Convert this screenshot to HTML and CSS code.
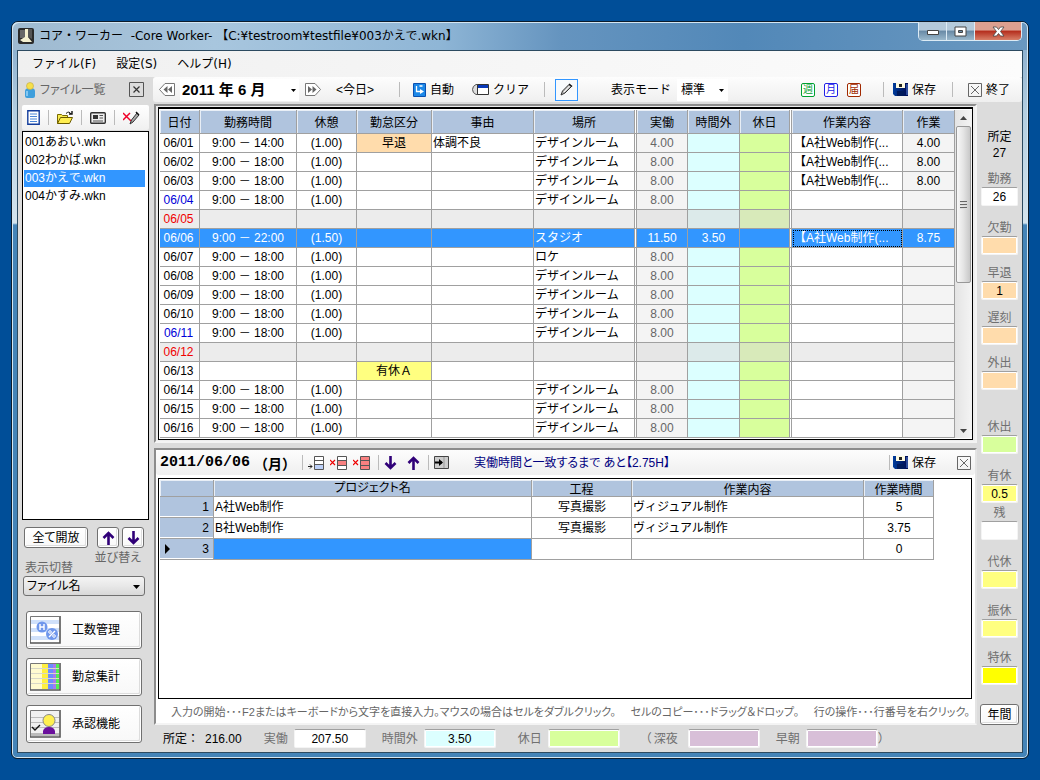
FILE: index.html
```html
<!DOCTYPE html>
<html lang="ja">
<head>
<meta charset="utf-8">
<title>コア・ワーカー</title>
<link rel="stylesheet" href="styles.css">
</head>
<body>
<svg class="defs" aria-hidden="true">
  <defs>
    <linearGradient id="navy" x1="0" x2="1"><stop offset="0" stop-color="#003c9c"/><stop offset="1" stop-color="#000a50"/></linearGradient>
    <symbol id="floppy" viewBox="0 0 15 13"><path d="M0 0h15v13H2l-2-2z" fill="url(#navy)"/><path d="M3 0h9v5H3z" fill="#fffbe0"/><path d="M6 1h3v3H6z" fill="#222"/><path d="M4 8h7v5H4z" fill="#001a5c"/><path d="M14 1v11" stroke="#5a8ae0"/></symbol>
    <symbol id="xbox" viewBox="0 0 14 14"><path d="M.5.5h13v13H.5zM3 3l8 8M11 3l-8 8" fill="none" stroke="#666"/></symbol>
    <symbol id="down" viewBox="0 0 13 14"><path d="M6.500 0v12M1.500 7l5 5 5-5" fill="none" stroke="#300078" stroke-width="2.600"/></symbol>
    <symbol id="up" viewBox="0 0 13 14"><path d="M6.500 14V2M1.500 7l5-5 5 5" fill="none" stroke="#300078" stroke-width="2.600"/></symbol>
  </defs>
</svg>
<div class="window">
  <header class="titlebar">
    <svg class="app-icon" width="16" height="16" viewBox="0 0 16 16"><rect width="16" height="16" rx="2" fill="#2b2b2b"/><path d="M2 2h6v8H2z" fill="#666"/><path d="M7 1h3v8l4 5H5l-3-2 5-3z" fill="#f4f0d0"/><path d="M10 1h4v10l-4-2z" fill="#555"/></svg>
    <h1 class="title">コア・ワーカー&nbsp; -Core Worker- 【C:¥testroom¥testfile¥003かえで.wkn】</h1>
    <div class="caption-buttons">
      <button class="cap" aria-label="最小化"><svg width="14" height="10" viewBox="0 0 14 10"><path d="M1.500 4.500h11v4h-11z" fill="#fff" stroke="#444"/></svg></button>
      <button class="cap" aria-label="最大化"><svg width="13" height="11" viewBox="0 0 13 11"><path d="M1 1h11v9H1zM4.500 4.500h4v2h-4z" fill="#fff" fill-rule="evenodd" stroke="#444"/></svg></button>
      <button class="cap cap-close" aria-label="閉じる"><svg width="13" height="11" viewBox="0 0 13 11"><path d="M1 1h3.500l2 2.500L8.500 1H12L8.500 5.500 12 10H8.500l-2-2.500-2 2.500H1l3.500-4.500z" fill="#fff" stroke="#444" stroke-width=".8"/></svg></button>
    </div>
  </header>
  <div class="client">
    <nav class="menu">
      <button>ファイル(F)</button><button>設定(S)</button><button>ヘルプ(H)</button>
    </nav>
    <div class="workspace">
      <aside class="side">
        <div class="side-head">
          <svg width="12" height="16" viewBox="0 0 12 16"><path d="M1 9q0-3 5-3t5 3v5q0 2-2 2H3q-2 0-2-2z" fill="#3f9fdc"/><path d="M3 9v5" stroke="#9bd4f8" stroke-width="1.500"/><circle cx="6" cy="4" r="3.500" fill="#f6e04a" stroke="#c0a848" stroke-width=".6"/></svg>
          <span class="pg">ファイル一覧</span>
          <button class="close-side" aria-label="一覧を閉じる"><svg width="15" height="15" viewBox="0 0 15 15"><path d="M.5.5h14v14H.5z" fill="none" stroke="#555"/><path d="M4.500 4.500l6 6M10.500 4.500l-6 6" stroke="#333" stroke-width="1.200"/></svg></button>
        </div>
        <div class="side-tools">
          <button aria-label="新規"><svg width="13" height="15" viewBox="0 0 13 15"><path d="M.8.8h11.400v13.400H.8z" fill="#fff" stroke="#123c9c" stroke-width="1.400"/><path d="M3 4h7M3 6.500h7M3 9h7M3 11.500h7" stroke="#4a86d8"/></svg></button>
          <i class="sep"></i>
          <button aria-label="開く"><svg width="17" height="14" viewBox="0 0 17 14"><path d="M.5 12.500v-9h4l1 1h5v3" fill="#f8ec50" stroke="#7a6a00"/><path d="M.5 12.500l3-6h12l-3 6z" fill="#ffee50" stroke="#6a5a00"/><path d="M9 2.500q3-3 5 .5" fill="none" stroke="#111"/><path d="M12 3h3V0" fill="none" stroke="#111" stroke-width="1.400"/></svg></button>
          <i class="sep"></i>
          <button aria-label="詳細"><svg width="16" height="12" viewBox="0 0 16 12"><rect x=".7" y=".7" width="14.600" height="10.600" rx="1" fill="#eee" stroke="#333" stroke-width="1.400"/><path d="M3 3h5v4H3z" fill="#333"/><path d="M9.500 3.500H13M9.500 6H13M3 9h10" stroke="#555"/></svg></button>
          <i class="sep"></i>
          <button aria-label="削除"><svg width="17" height="14" viewBox="0 0 17 14"><path d="M0 2l8 8M7 2L0 9" stroke="#f00028" stroke-width="1.500"/><path d="M7 13l1.500-4 5.500-7 2 2-6 7z" fill="#aaa" stroke="#333"/><path d="M13 1l3 3" stroke="#111" stroke-width="1.500"/></svg></button>
        </div>
        <ul class="files mono" role="listbox" aria-label="ファイル一覧">
          <li role="option">001あおい.wkn</li>
          <li role="option">002わかば.wkn</li>
          <li role="option" aria-selected="true" class="on">003かえで.wkn</li>
          <li role="option">004かすみ.wkn</li>
        </ul>
        <div class="side-row">
          <button class="btn btn-open pg">全て開放</button>
          <div class="sort-buttons">
            <button class="btn btn-sort" aria-label="上へ"><svg width="13" height="14"><use href="#up"/></svg></button>
            <button class="btn btn-sort" aria-label="下へ"><svg width="13" height="14"><use href="#down"/></svg></button>
          </div>
        </div>
        <div class="side-labels"><label class="pg" for="sortkey">表示切替</label><span class="pg sort-label">並び替え</span></div>
        <div class="combo side-combo"><select id="sortkey" class="pg"><option>ファイル名</option></select><svg class="combo-arrow" width="7" height="4" viewBox="0 0 7 4"><path d="M0 0h7L3.500 4z"/></svg></div>
        <div class="big-buttons">
          <button class="btn big"><svg width="31" height="28" viewBox="0 0 31 28"><path d="M1 1h28v25H1z" fill="#fff"/><path d="M1 4h28v4H1zM1 12h28v4H1zM1 20h28v4H1z" fill="#cfe0fa"/><circle cx="12" cy="11" r="5.500" fill="#6f97ec"/><circle cx="22" cy="18" r="6" fill="#6f97ec"/><path d="M10 8v6M14 8v6M10 11h4M25 15l-6 6" stroke="#fff" stroke-width="1.400"/><circle cx="20" cy="16" r="1.300" fill="none" stroke="#fff"/><circle cx="24" cy="20" r="1.300" fill="none" stroke="#fff"/><path d="M.5 27V.5H29" fill="none" stroke="#777"/><path d="M0 27h30V0" fill="none" stroke="#555" stroke-width="1.600"/></svg><span>工数管理</span></button>
          <button class="btn big"><svg width="31" height="28" viewBox="0 0 31 28"><path d="M1 1h28v25H1z" fill="#fffbd0"/><path d="M12 1h6v25h-6z" fill="#ffef40"/><path d="M18 1h5v25h-5z" fill="#6c8cff"/><path d="M23 1h3v25h-3z" fill="#a878f0"/><path d="M26 1h3v25h-3z" fill="#50f050"/><path d="M1 5.500h28M1 10.500h28M1 15.500h28M1 20.500h28" stroke="#d8d8c8"/><path d="M.5 27V.5H29" fill="none" stroke="#777"/><path d="M0 27h30V0" fill="none" stroke="#555" stroke-width="1.600"/></svg><span>勤怠集計</span></button>
          <button class="btn big"><svg width="31" height="28" viewBox="0 0 31 28"><path d="M1 1h28v25H1z" fill="#f0f0f0"/><path d="M1 7.500h28M1 12.500h28M1 17.500h28" stroke="#bbb"/><path d="M1 23h28v3H1z" fill="#bbb"/><path d="M13 24v-3q1-4 6-4t6 4v3z" fill="#6a109c"/><circle cx="19" cy="10.500" r="6" fill="#fff050" stroke="#888"/><path d="M2 17l3 3 5-5" fill="none" stroke="#111" stroke-width="1.400"/><path d="M.5 27V.5H29" fill="none" stroke="#777"/><path d="M0 27h30V0" fill="none" stroke="#555" stroke-width="1.600"/></svg><span>承認機能</span></button>
        </div>
      </aside>
      <main class="main">
        <div class="toolbar">
          <button aria-label="前月"><svg width="16" height="13" viewBox="0 0 16 13"><path d="M15.500.5H6L.5 6.500l5.500 6h9.500z" fill="#fff" stroke="#777"/><path d="M8.500 3v7L4.500 6.500zM13 3v7L9 6.500z" fill="#666"/></svg></button>
          <div class="combo month"><select aria-label="年月"><option>2011 年 6 月</option></select><svg class="combo-arrow" width="5" height="3" viewBox="0 0 5 3"><path d="M0 0h5L2.500 3z"/></svg></div>
          <button aria-label="翌月"><svg width="16" height="13" viewBox="0 0 16 13"><path d="M.5.5H10l5.500 6-5.500 6H.5z" fill="#fff" stroke="#777"/><path d="M3 3v7l4-3.500zM7.500 3v7l4-3.500z" fill="#666"/></svg></button>
          <button class="today">&lt;今日&gt;</button>
          <i class="sep"></i>
          <button class="ico-btn auto"><svg width="13" height="14" viewBox="0 0 13 14"><rect width="13" height="14" rx="1" fill="#0a50b0"/><path d="M1 1h11v12H1z" fill="#1c88e8"/><path d="M3.500 3v5.500H8M6.500 3h3" fill="none" stroke="#fff" stroke-width="1.300"/><path d="M7 6l4 2.500L7 11z" fill="#fff"/></svg>自動</button>
          <button class="ico-btn clear"><svg width="17" height="11" viewBox="0 0 17 11"><path d="M6 .5H4Q.5 2 .5 5.500T4 10.500h2z" fill="#ddd" stroke="#555"/><path d="M5.500.5h11v10h-11z" fill="#fff" stroke="#333"/><path d="M6 1h10v3H6z" fill="#0838b8"/></svg>クリア</button>
          <i class="sep"></i>
          <button class="pen" aria-label="編集" aria-pressed="true"><svg width="13" height="13" viewBox="0 0 13 13"><path d="M1 12l1.500-4L9 1.500l2.500 2L5 10z" fill="#bbb" stroke="#333"/><path d="M4 9l5.500-6" stroke="#fff"/><path d="M9 1l3 2.500" stroke="#111" stroke-width="1.500"/></svg></button>
          <label class="mode-label" for="mode">表示モード</label>
          <div class="combo mode"><select id="mode"><option>標準</option></select><svg class="combo-arrow" width="5" height="3" viewBox="0 0 5 3"><path d="M0 0h5L2.500 3z"/></svg></div>
          <span class="spring"></span>
          <div class="stamps"><button class="stamp week">週</button><button class="stamp mon">月</button><button class="stamp note">届</button></div>
          <i class="sep"></i>
          <button class="ico-btn"><svg width="15" height="13"><use href="#floppy"/></svg>保存</button>
          <i class="sep"></i>
          <button class="ico-btn quit"><svg width="14" height="14"><use href="#xbox"/></svg>終了</button>
        </div>
        <div class="body">
          <div class="center">
            <section class="panel upper">
              <div class="box sheet-box">
                <table class="sheet mono">
                  <colgroup><col class="c-date"><col class="c-time"><col class="c-rest"><col class="c-kind"><col class="c-why"><col class="c-place"><col class="c-work"><col class="c-over"><col class="c-over"><col><col class="c-job"></colgroup>
                  <thead><tr><th>日付</th><th>勤務時間</th><th>休憩</th><th>勤怠区分</th><th>事由</th><th class="dbl">場所</th><th>実働</th><th>時間外</th><th class="dbl">休日</th><th>作業内容</th><th>作業</th></tr></thead>
                  <tbody>
                    <tr><td>06/01</td><td>9:00 － 14:00</td><td>(1.00)</td><td class="orange">早退</td><td>体調不良</td><td>デザインルーム</td><td>4.00</td><td></td><td></td><td>【A社Web制作(...</td><td>4.00</td></tr>
                    <tr><td>06/02</td><td>9:00 － 18:00</td><td>(1.00)</td><td></td><td></td><td>デザインルーム</td><td>8.00</td><td></td><td></td><td>【A社Web制作(...</td><td>8.00</td></tr>
                    <tr><td>06/03</td><td>9:00 － 18:00</td><td>(1.00)</td><td></td><td></td><td>デザインルーム</td><td>8.00</td><td></td><td></td><td>【A社Web制作(...</td><td>8.00</td></tr>
                    <tr class="sat"><td>06/04</td><td>9:00 － 18:00</td><td>(1.00)</td><td></td><td></td><td>デザインルーム</td><td>8.00</td><td></td><td></td><td></td><td></td></tr>
                    <tr class="sun"><td>06/05</td><td></td><td></td><td></td><td></td><td></td><td></td><td></td><td></td><td></td><td></td></tr>
                    <tr class="sel"><td>06/06</td><td>9:00 － 22:00</td><td>(1.50)</td><td></td><td></td><td>スタジオ</td><td>11.50</td><td>3.50</td><td></td><td class="focus">【A社Web制作(...</td><td>8.75</td></tr>
                    <tr><td>06/07</td><td>9:00 － 18:00</td><td>(1.00)</td><td></td><td></td><td>ロケ</td><td>8.00</td><td></td><td></td><td></td><td></td></tr>
                    <tr><td>06/08</td><td>9:00 － 18:00</td><td>(1.00)</td><td></td><td></td><td>デザインルーム</td><td>8.00</td><td></td><td></td><td></td><td></td></tr>
                    <tr><td>06/09</td><td>9:00 － 18:00</td><td>(1.00)</td><td></td><td></td><td>デザインルーム</td><td>8.00</td><td></td><td></td><td></td><td></td></tr>
                    <tr><td>06/10</td><td>9:00 － 18:00</td><td>(1.00)</td><td></td><td></td><td>デザインルーム</td><td>8.00</td><td></td><td></td><td></td><td></td></tr>
                    <tr class="sat"><td>06/11</td><td>9:00 － 18:00</td><td>(1.00)</td><td></td><td></td><td>デザインルーム</td><td>8.00</td><td></td><td></td><td></td><td></td></tr>
                    <tr class="sun"><td>06/12</td><td></td><td></td><td></td><td></td><td></td><td></td><td></td><td></td><td></td><td></td></tr>
                    <tr><td>06/13</td><td></td><td></td><td class="yellow">有休Ａ</td><td></td><td></td><td></td><td></td><td></td><td></td><td></td></tr>
                    <tr><td>06/14</td><td>9:00 － 18:00</td><td>(1.00)</td><td></td><td></td><td>デザインルーム</td><td>8.00</td><td></td><td></td><td></td><td></td></tr>
                    <tr><td>06/15</td><td>9:00 － 18:00</td><td>(1.00)</td><td></td><td></td><td>デザインルーム</td><td>8.00</td><td></td><td></td><td></td><td></td></tr>
                    <tr><td>06/16</td><td>9:00 － 18:00</td><td>(1.00)</td><td></td><td></td><td>デザインルーム</td><td>8.00</td><td></td><td></td><td></td><td></td></tr>
                  </tbody>
                </table>
                <div class="scroll">
                  <svg width="7" height="4" viewBox="0 0 7 4"><path d="M0 4h7L3.500 0z" fill="#444"/></svg>
                  <div class="thumb"><i></i><i></i><i></i></div>
                  <svg class="scroll-down" width="7" height="4" viewBox="0 0 7 4"><path d="M0 0h7L3.500 4z" fill="#444"/></svg>
                </div>
              </div>
            </section>
            <section class="panel lower">
              <div class="toolbar detail-bar">
                <h2 class="day">2011/06/06 <span>（月）</span></h2>
                <i class="sep"></i>
                <button aria-label="行挿入"><svg width="16" height="14" viewBox="0 0 16 14"><path d="M6.500.5h9v13h-9z" fill="#fff" stroke="#555"/><path d="M7 9h8v4H7z" fill="#bcd0f8"/><path d="M6.500 4.500h9M6.500 8.500h9" stroke="#555"/><path d="M0 10.500h4M2 8.500l2 2-2 2" fill="none" stroke="#222"/></svg></button>
                <button aria-label="行クリア"><svg width="17" height="14" viewBox="0 0 17 14"><path d="M7.500.5h9v13h-9z" fill="#fff" stroke="#555"/><path d="M8 5h8v4H8z" fill="#f88080"/><path d="M7.500 4.500h9M7.500 9.500h9" stroke="#555"/><path d="M0 4l5 5M5 4L0 9" stroke="#e00" stroke-width="1.200"/></svg></button>
                <button aria-label="全クリア"><svg width="17" height="14" viewBox="0 0 17 14"><path d="M7.500.5h9v13h-9z" fill="#f88080" stroke="#555"/><path d="M7.500 4.500h9M7.500 9.500h9" stroke="#555"/><path d="M0 4l5 5M5 4L0 9" stroke="#e00" stroke-width="1.200"/></svg></button>
                <i class="sep"></i>
                <button aria-label="下へ移動"><svg width="13" height="14"><use href="#down"/></svg></button>
                <button class="move-up" aria-label="上へ移動"><svg width="13" height="14"><use href="#up"/></svg></button>
                <i class="sep"></i>
                <button aria-label="取り込み"><svg width="15" height="13" viewBox="0 0 15 13"><path d="M.5.5h14v12H.5z" fill="#ccc" stroke="#444"/><path d="M10 1v11" stroke="#999"/><path d="M1 6.500h7" stroke="#000" stroke-width="2"/><path d="M5 3l4 3.500L5 10z"/></svg></button>
                <p class="remain pg">実働時間と一致するまで あと【2.75H】</p>
                <span class="spring"></span>
                <i class="sep"></i>
                <button class="ico-btn"><svg width="15" height="13"><use href="#floppy"/></svg>保存</button>
                <button class="close-detail" aria-label="閉じる"><svg width="14" height="14"><use href="#xbox"/></svg></button>
              </div>
              <div class="box detail-box">
                <table class="detail mono">
                  <colgroup><col class="d-no"><col class="d-name"><col class="d-step"><col class="d-what"><col class="d-hour"></colgroup>
                  <thead><tr><th></th><th class="pg">プロジェクト名</th><th>工程</th><th>作業内容</th><th>作業時間</th></tr></thead>
                  <tbody>
                    <tr><th>1</th><td>A社Web制作</td><td>写真撮影</td><td>ヴィジュアル制作</td><td>5</td></tr>
                    <tr><th>2</th><td>B社Web制作</td><td>写真撮影</td><td>ヴィジュアル制作</td><td>3.75</td></tr>
                    <tr><th><div class="current">3</div></th><td class="active"></td><td></td><td></td><td>0</td></tr>
                  </tbody>
                </table>
              </div>
              <p class="hint pg"><span>入力の開始･･･F2またはキーボードから文字を直接入力。マウスの場合はセルをダブルクリック。</span><span>セルのコピー･･･ドラッグ＆ドロップ。</span><span>行の操作･･･行番号を右クリック。</span></p>
            </section>
          </div>
          <div class="stats">
            <div class="stat dark"><span>所定</span><output>27</output></div>
            <div class="stat g10"><label for="s1">勤務</label><input id="s1" value="26" readonly></div>
            <div class="stat g14"><label for="s2">欠勤</label><input id="s2" class="orange" readonly></div>
            <div class="stat g10"><label for="s3">早退</label><input id="s3" class="orange" value="1" readonly></div>
            <div class="stat g10"><label for="s4">遅刻</label><input id="s4" class="orange" readonly></div>
            <div class="stat g10"><label for="s5">外出</label><input id="s5" class="orange" readonly></div>
            <div class="stat g29"><label for="s6">休出</label><input id="s6" class="lime" readonly></div>
            <div class="stat g14"><label for="s7">有休</label><input id="s7" class="yellow" value="0.5" readonly></div>
            <div class="stat g2"><label for="s8">残</label><input id="s8" readonly></div>
            <div class="stat g14"><label for="s9">代休</label><input id="s9" class="yellow" readonly></div>
            <div class="stat g14"><label for="s10">振休</label><input id="s10" class="yellow" readonly></div>
            <div class="stat g12"><label for="s11">特休</label><input id="s11" class="vivid" readonly></div>
            <button class="btn year">年間</button>
          </div>
        </div>
        <footer class="totals">
          <span class="fixed">所定：</span><output class="fixed-value">216.00</output>
          <label for="t1">実働</label><input id="t1" value="207.50" readonly>
          <label for="t2">時間外</label><input id="t2" class="aqua" value="3.50" readonly>
          <label for="t3" class="wide">休日</label><input id="t3" class="lime" readonly>
          <span class="paren">（</span><label for="t4" class="tight">深夜</label><input id="t4" class="mauve" readonly>
          <label for="t5">早朝</label><input id="t5" class="mauve" readonly><span>）</span>
        </footer>
      </main>
    </div>
  </div>
</div>
</body>
</html>
```
FILE: styles.css
```css
* { box-sizing: border-box; }
body {
  margin: 0;
  min-height: 100vh;
  padding: 21px 11px;
  display: flex;
  background: #004e98;
  font: 12px/16px "Liberation Sans", "Noto Sans CJK JP", sans-serif;
  color: #000;
}
.defs { position: absolute; width: 0; height: 0; }
h1, h2, p, ul { margin: 0; padding: 0; font-weight: normal; }
button {
  font: inherit; color: inherit; background: none; border: 0; padding: 0; margin: 0;
  display: flex; align-items: center; justify-content: center; white-space: nowrap;
}
svg { display: block; flex: none; }
input, select { font: inherit; color: inherit; min-width: 0; }
.mono { font-family: "Liberation Sans", "Noto Sans CJK JP", sans-serif; }
.pg { font-family: "Liberation Sans", "Noto Sans CJK JP", sans-serif; font-feature-settings: "palt"; }

/* window frame */
.window {
  flex: 1; min-width: 0; display: flex; flex-direction: column;
  border: 1px solid #0c1c2c; border-radius: 7px 7px 6px 6px;
  box-shadow: inset 0 0 0 1px #d4e6f2;
  background: linear-gradient(180deg, #8fb2d0 0, #8fb2d0 28px, #b4cee0 90px, #d4e4ee 201px, #4484b8 203px, #4484b8 100%);
  padding: 0 5px 5px;
  overflow: hidden;
}
.titlebar {
  height: 28px; flex: none; display: flex; align-items: center; margin: 0 -5px; padding: 0 6px;
  background: linear-gradient(90deg, #9fbad0 0, #a8c6de 20%, #8fb6d6 42%, #6594bf 54%, #5288b8 72%, #6a98c0 100%);
  border-radius: 6px 6px 0 0; box-shadow: inset 1px 1px 0 #d4e6f2, inset -1px 0 0 #d4e6f2;
}
.title { flex: 1; padding-left: 5px; font: 12px/20px "DejaVu Sans", "Noto Sans CJK JP", sans-serif; white-space: nowrap; }
.caption-buttons { display: flex; align-self: flex-start; border: 1px solid #dcebf5; border-top: 0; border-radius: 0 0 5px 5px; overflow: hidden; }
.cap { width: 28px; height: 18px; background: linear-gradient(#b4cadb 0 45%, #688aa6 50%, #9ab8cc); border-right: 1px solid #dcebf5; }
.cap-close { width: 46px; border: 0; background: linear-gradient(#dca090 0 45%, #b42c1c 50%, #d88068); }

.client { flex: 1; display: flex; flex-direction: column; background: #dcdcdc; border: 1px solid #2c4a60; }
.menu {
  height: 26px; display: flex; align-items: center; gap: 20px; padding-left: 14px;
  background: linear-gradient(90deg, #f0f0f0, #fcfcfc); font: 12px/16px "DejaVu Sans", "Noto Sans CJK JP", sans-serif;
}
.workspace { flex: 1; display: flex; }

/* left side */
.side { width: 135px; flex: none; display: flex; flex-direction: column; padding: 0 4px 9px; color: #666; }
.side-head { height: 25px; display: flex; align-items: center; gap: 4px; padding: 0 5px 0 2px; }
.close-side { margin-left: auto; }
.side-tools { height: 25px; margin: 3px 0 1px; display: flex; align-items: center; justify-content: space-between; padding: 0 9px 0 5px; background: linear-gradient(#fff, #f0f0f0); border-radius: 2px; }
.sep { width: 1px; height: 15px; background: #bbb; flex: none; }
.files { flex: 1; border: 1px solid #000; background: #fff; color: #000; padding: 2px 3px 0 1px; list-style: none; }
.files li { height: 18px; line-height: 17px; padding-left: 1px; border-bottom: 1px solid #fff; }
.files .on { background: #3296ff; color: #fff; }
.btn { border: 1px solid #707070; border-radius: 3px; background: linear-gradient(#fff, #f8f8f8); box-shadow: inset 0 0 0 1px #fff, inset -1px -1px 0 1px #ddd; color: #000; }
.side-row { display: flex; justify-content: space-between; padding: 7px 5px 0 2px; }
.btn-open { width: 64px; height: 21px; }
.sort-buttons { display: flex; gap: 3px; }
.btn-sort { width: 22px; height: 21px; }
.side-labels { height: 28px; display: flex; justify-content: space-between; padding: 2px 8px 0 3px; }
.side-labels label { align-self: flex-end; }
.combo { position: relative; display: flex; }
.combo select { appearance: none; border: 0; background: none; width: 100%; padding: 0; border-radius: 0; outline: 0; }
.combo-arrow { position: absolute; right: 4px; top: 50%; margin-top: -1px; pointer-events: none; }
.side-combo { margin: 0 4px 0 1px; height: 20px; border: 1px solid #707070; border-radius: 3px; background: linear-gradient(#f4f4f4, #e8e8e8 50%, #d8d8d8); color: #000; }
.side-combo select { padding-left: 3px; }
.big-buttons { display: flex; flex-direction: column; gap: 9px; padding: 15px 7px 0 4px; }
.big { height: 38px; justify-content: flex-start; padding-left: 3px; gap: 11px; }

/* toolbars */
.main { flex: 1; min-width: 0; display: flex; flex-direction: column; }
.toolbar { height: 25px; display: flex; align-items: center; padding: 0 12px 0 6px; background: linear-gradient(#fdfdfd, #efefef); border-radius: 3px; white-space: nowrap; }
.spring { flex: 1; }
.month { width: 119px; height: 22px; margin: 0 6px 0 5px; background: #fff; }
.month select { font: bold 15px/22px "Liberation Sans", "Noto Sans CJK JP", sans-serif; padding-left: 2px; }
.month .combo-arrow { right: 3px; }
.today { margin: 0 25px 0 15px; }
.ico-btn { gap: 4px; }
.auto { margin: 0 18px 0 13px; }
.clear { margin-right: 15px; }
.pen { width: 23px; height: 22px; margin: 0 33px 0 10px; border: 1px solid #3296ff; background: #f8fafc; }
.mode { width: 51px; height: 22px; margin-left: 6px; background: #fff; }
.mode select { padding-left: 4px; }
.stamps { display: flex; gap: 9px; margin-right: 22px; }
.stamp { width: 14px; height: 14px; border: 1px solid; border-radius: 2px; font-size: 10px; line-height: 12px; background: #fff; }
.week { color: #00a030; } .mon { color: #2020e8; } .note { color: #a02800; }
.sep + .ico-btn { margin-left: 9px; }
.ico-btn + .sep { margin-left: 16px; }
.clear + .sep { margin-left: 0; }
.sep + .auto { margin-left: 13px; }
.sep + .quit { margin-left: 15px; }

/* attendance panel */
.body { flex: 1; display: flex; }
.center { flex: 1; min-width: 0; display: flex; flex-direction: column; padding: 2px 0 0 1px; }
.panel { border: 2px solid; border-color: #8c8c8c #f4f4f4 #f4f4f4 #8c8c8c; }
.upper { padding: 1px 2px; background: #eee; margin-bottom: 5px; }
.box { border: 1px solid #000; background: #fff; }
.sheet-box { display: flex; border-top-width: 2px; padding: 1px 0 1px 1px; }
table { table-layout: fixed; border-spacing: 0; border-collapse: separate; }
td, th { padding: 0; font-weight: normal; border: 0 solid #a0a0a0; border-width: 0 1px 1px 0; overflow: hidden; white-space: nowrap; }
thead th { background: #b0c4de; box-shadow: inset 1px 1px 0 #e8eef6; font-family: "Noto Sans CJK JP", sans-serif; }
.sheet { flex: 1; min-width: 0; width: 0; }
.sheet thead th { height: 24px; line-height: 22px; }
.sheet td { height: 19px; line-height: 16px; text-align: center; font-size: 12px; }
.c-date { width: 40px; } .c-time { width: 97px; } .c-rest { width: 60px; } .c-kind { width: 75px; }
.c-why { width: 102px; } .c-place { width: 103px; } .c-work { width: 51px; } .c-over { width: 52px; } .c-job { width: 52px; }
.sheet td:first-child { padding-right: 2px; }
.sheet td:nth-child(5), .sheet td:nth-child(6) { text-align: left; padding-left: 1px; }
.sheet td:nth-child(10) { text-align: left; padding-left: 2px; }
.sheet td:nth-child(6), .sheet td:nth-child(9), .sheet .dbl { border-right: 3px double #a0a0a0; background-clip: padding-box; }
.sheet td:nth-child(7) { background: #f4f4f4; color: #666; }
.sheet td:nth-child(8) { background: #dcffff; }
.sheet td:nth-child(9) { background-color: #d8ff9c; }
.sheet td:nth-child(11) { background: #f4f4f4; }
.sat td:first-child { color: #0000d8; }
.sun td:first-child { color: #f00000; }
.sheet .sun td { background-color: #ececec; }
.sheet .sun td:nth-child(7), .sheet .sun td:nth-child(11) { background: #e6e6e6; }
.sheet .sun td:nth-child(8) { background: #dceaea; }
.sheet .sun td:nth-child(9) { background-color: #d8eaba; }
.sheet .sel td { background-color: #3296ff; color: #fff; }
.sheet .sel td:nth-child(7), .sheet .sel td:nth-child(11) { background: #3296ff; color: #fff; }
.sheet .sel .focus { outline: 1px dotted #000; outline-offset: -2px; }
.orange { background: #ffdcac; } .yellow { background: #ffff80; } .lime { background: #d8ff9c; }
.vivid { background: #ffff00; } .aqua { background: #dcffff; } .mauve { background: #d8bfd8; }
.scroll { width: 17px; display: flex; flex-direction: column; align-items: center; background: linear-gradient(90deg, #e4e4e4, #f4f4f4); padding: 6px 0 5px; }
.thumb { width: 15px; height: 157px; margin-top: 6px; border: 1px solid #989898; border-radius: 2px; background: linear-gradient(90deg, #f8f8f8, #e4e4e4 50%, #c8c8c8); display: flex; flex-direction: column; align-items: center; justify-content: center; gap: 1px; }
.thumb i { width: 7px; height: 2px; background: #666; border-bottom: 1px solid #ddd; }
.scroll-down { margin-top: auto; }

/* detail panel */
.lower { flex: 1; display: flex; flex-direction: column; background: #fff; border-right-color: #e4e4e4; }
.detail-bar { padding: 0 4px; margin-bottom: 3px; }
.day { width: 142px; font: bold 15px/20px "Liberation Mono", "Noto Sans CJK JP", monospace; display: flex; }
.day span { padding-left: 4px; font-family: "Noto Sans CJK JP", sans-serif; font-size: 14px; }
.detail-bar > button { margin: 0 0 0 6px; }
.detail-bar .sep + button { margin-left: 5px; }
.detail-bar button + .sep { margin-left: 8px; }
.detail-bar .move-up { margin-left: 10px; }
.detail-bar .sep { margin-left: 0; }
.remain { margin-left: 25px; color: #000080; }
.detail-bar .sep + .ico-btn { margin-left: 3px; }
.detail-bar .close-detail { margin-left: 21px; }
.detail-box { flex: 1; margin: 0 3px 0 2px; padding: 1px; }
.detail { width: 774px; }
.d-no { width: 54px; } .d-name { width: 318px; } .d-step { width: 100px; } .d-what { width: 232px; } .d-hour { width: 70px; }
.detail thead th { height: 17px; line-height: 15px; }
.detail td, .detail tbody th { height: 21px; line-height: 18px; }
.detail td { padding-left: 1px; }
.detail tbody th { background: #b0c4de; text-align: right; padding-right: 4px; box-shadow: inset 0 -1px 0 #fff; }
.current { display: flex; align-items: center; justify-content: space-between; padding-left: 5px; }
.current::before { content: ""; border: 5px solid transparent; border-left-color: #000; border-right: 0; }
.detail td:nth-child(3), .detail td:nth-child(5) { text-align: center; }
.detail .active { background: #3296ff; }
.hint { height: 24px; line-height: 26px; font-size: 11px; display: flex; justify-content: space-between; padding: 0 5px 0 15px; color: #666; white-space: nowrap; }

/* right column */
.stats { width: 45px; flex: none; display: flex; flex-direction: column; align-items: center; padding-top: 27px; color: #707070; }
.stat { display: flex; flex-direction: column; align-items: center; width: 37px; }
.stat input, .totals input { height: 19px; width: 100%; border: 1px solid #f4f4f4; border-top-color: #a0a0a0; border-radius: 2px; padding: 0; text-align: center; color: #000; outline: 0; box-shadow: inset 0 0 0 1px #fff; }
.dark { color: #000; }
.g2 { margin-top: 2px; } .g10 { margin-top: 10px; } .g12 { margin-top: 12px; } .g14 { margin-top: 14px; } .g29 { margin-top: 29px; }
.year { width: 39px; height: 21px; margin-top: auto; }

/* totals */
.totals { height: 27px; display: flex; align-items: center; padding-left: 10px; color: #707070; white-space: nowrap; }
.totals .fixed, .fixed-value { color: #000; }
.fixed-value { padding: 0 6px; }
.totals label { padding: 0 6px 0 16px; }
.totals .wide { padding-left: 22px; }
.totals .tight { padding: 0 10px 0 2px; }
.totals input { width: 72px; flex: none; }
.paren { margin-left: 20px; }
```
